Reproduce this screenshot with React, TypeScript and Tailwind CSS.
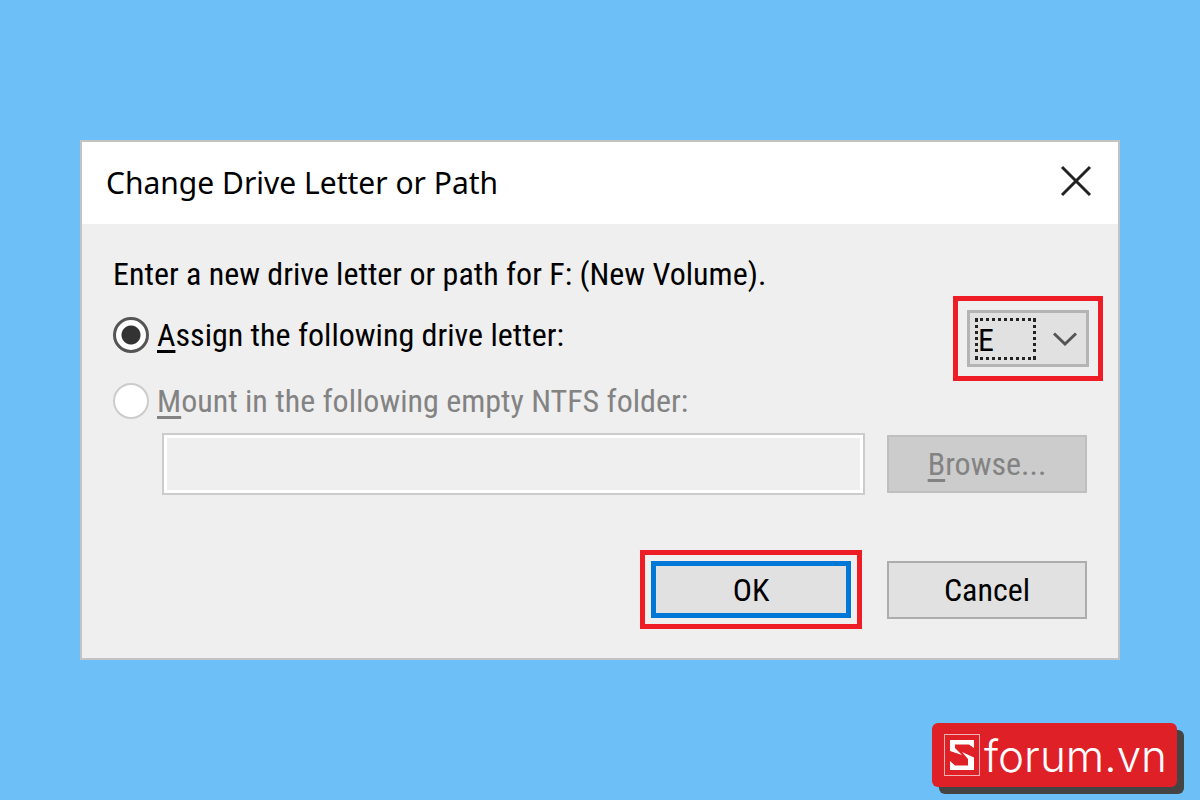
import React, { useState } from "react";

const DRIVE_LETTERS = ["E", "G", "H", "I", "J"];

interface RadioRowProps {
  id: string;
  accessKey: string;
  label: string;
  checked?: boolean;
  disabled?: boolean;
}

function Mnemonic({ letter }: { letter: string }) {
  return (
    <span className="underline decoration-[3px] underline-offset-[4px] [text-decoration-skip-ink:none]">
      {letter}
    </span>
  );
}

function RadioRow({ id, accessKey, label, checked, disabled }: RadioRowProps) {
  return (
    <label
      htmlFor={id}
      className={`flex items-center gap-2 whitespace-nowrap ${disabled ? "text-[#838383]" : "text-black"}`}
    >
      <input
        id={id}
        type="radio"
        name="target"
        defaultChecked={checked}
        disabled={disabled}
        className="size-9 shrink-0 appearance-none rounded-full border-[3px] border-[#555] bg-white checked:bg-[radial-gradient(circle,#333_0_9px,#fff_10px)] disabled:border-2 disabled:border-[#ccc]"
      />
      <span>
        <Mnemonic letter={accessKey} />
        {label}
      </span>
    </label>
  );
}

function DriveSelect() {
  const [letter, setLetter] = useState("E");

  return (
    <div className="-mr-4 shrink-0 border-5 border-[#ee1c25] p-[9px]">
      <div className="relative">
        <select
          aria-label="Drive letter"
          value={letter}
          onChange={(e) => setLetter(e.target.value)}
          className="block h-[57px] w-[122px] appearance-none rounded-none border-[3px] border-[#b4b4b4] bg-[#e1e1e1] pt-0.5 pl-2 text-black outline-none"
        >
          {DRIVE_LETTERS.map((l) => (
            <option key={l} value={l}>
              {l}
            </option>
          ))}
        </select>
        {/* Focus rectangle */}
        <span className="pointer-events-none absolute top-2 left-2 h-[42px] w-[61px] border-3 border-dotted border-[#222]" />
        <svg
          viewBox="0 0 24 14"
          className="pointer-events-none absolute top-[22px] right-3 h-3.5 w-6"
          fill="none"
          stroke="#555"
          strokeWidth="3"
        >
          <path d="M1 1.5 12 12 23 1.5" />
        </svg>
      </div>
    </div>
  );
}

function SforumBadge() {
  return (
    <a
      href="#sforum"
      className="absolute right-[23px] bottom-[13px] flex h-16 items-center gap-1 rounded-md bg-[#df2027] pr-2.5 pl-3 text-white shadow-[7px_7px_0_#444]"
    >
      <svg viewBox="0 0 36 42" className="h-[42px] w-9" fill="none">
        <rect x="0.5" y="0.5" width="35" height="41" stroke="#fff" strokeOpacity="0.65" />
        <path fill="#fff" d="M6 6H30V14L25 10.500H11V14L18 21L6 17Z" />
        <path fill="#fff" d="M18 18L30 23.500V36H6V27L11 31.500H24V25Z" />
      </svg>
      <span className="pt-0.5 font-['Inter',sans-serif] text-[44px] leading-none font-light">forum.vn</span>
    </a>
  );
}

export default function App() {
  return (
    <main className="relative flex min-h-screen items-center bg-[#6dbff7] px-20 font-['Roboto_Condensed','Roboto',sans-serif] text-[32px] leading-10 text-black">
      <section
        role="dialog"
        aria-labelledby="dialog-title"
        className="w-full border-2 border-[#c3c3c3] bg-[#efefef]"
      >
        <header className="flex h-[82px] items-center justify-between bg-white pr-[26px] pl-6">
          <h1 id="dialog-title" className="font-['Noto_Sans',sans-serif] text-[30px]">
            Change Drive Letter or Path
          </h1>
          <button type="button" aria-label="Close" className="pb-1">
            <svg viewBox="0 0 32 32" className="size-8" fill="none" stroke="#222" strokeWidth="3">
              <path d="M2 2 30 30M30 2 2 30" />
            </svg>
          </button>
        </header>

        <form className="px-[31px] pt-[30px] pb-[29px]" onSubmit={(e) => e.preventDefault()}>
          <p className="whitespace-nowrap">Enter a new drive letter or path for F: (New Volume).</p>

          <div className="mt-0.5 flex items-start justify-between">
            <div className="flex h-[78px] items-center">
              <RadioRow id="assign" accessKey="A" label="ssign the following drive letter:" checked />
            </div>
            <DriveSelect />
          </div>

          <RadioRow id="mount" accessKey="M" label="ount in the following empty NTFS folder:" disabled />

          <div className="mt-3 flex items-center gap-[22px] pl-[49px]">
            <input
              type="text"
              aria-label="NTFS folder"
              disabled
              className="h-[62px] min-w-0 flex-1 border-2 border-[#ccc] bg-[#efefef] px-3 shadow-[inset_0_0_0_3px_#fff]"
            />
            <button
              type="button"
              disabled
              className="h-[58px] w-[200px] border-2 border-[#bfbfbf] bg-[#ccc] text-[#838383]"
            >
              <Mnemonic letter="B" />
              rowse...
            </button>
          </div>

          <div className="mt-[55px] flex items-center justify-end gap-[25px]">
            <div className="border-5 border-[#ee1c25] p-[6px]">
              <button type="submit" className="block h-[57px] w-[200px] border-5 border-[#0078d7] bg-[#e1e1e1]">
                OK
              </button>
            </div>
            <button type="button" className="h-[58px] w-[200px] border-2 border-[#adadad] bg-[#e1e1e1]">
              Cancel
            </button>
          </div>
        </form>
      </section>

      <SforumBadge />
    </main>
  );
}
